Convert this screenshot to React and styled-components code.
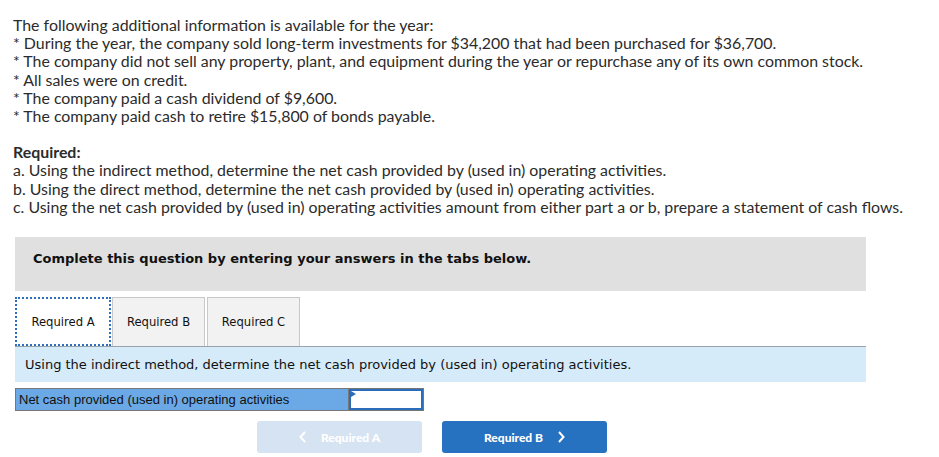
import React from "react";
import styled, { createGlobalStyle } from "styled-components";

const Global = createGlobalStyle`
  html, body { margin: 0; padding: 0; background: #fff; }
  body { font-family: Lato, "Noto Sans", sans-serif; color: #2b2b2b; }
  * { box-sizing: border-box; }
`;

const Page = styled.div`
  width: 939px;
  height: 457px;
  padding: 16px 0 0 15px;
  overflow: hidden;
`;

const Intro = styled.div`
  margin-left: -2px;
  font-size: 15.9px;
  line-height: 18.2px;
  color: #2b2b2b;
`;

const Line = styled.div`
  white-space: nowrap;
`;

const Heading = styled.div`
  font-weight: 700;
  margin-top: 18px;
`;

const Banner = styled.div`
  width: 851px;
  height: 54px;
  margin-top: 21px;
  background: #e0e0e0;
  padding: 14px 0 0 18px;
  font-family: "DejaVu Sans", Verdana, sans-serif;
  font-weight: 700;
  font-size: 13px;
  line-height: 16px;
  color: #111;
`;

const Tabs = styled.div`
  display: flex;
  margin-top: 6px;
  height: 49px;
`;

const Tab = styled.div`
  height: 49px;
  display: flex;
  align-items: center;
  justify-content: center;
  white-space: nowrap;
  font-family: "DejaVu Sans", Verdana, sans-serif;
  font-size: 11.6px;
  color: #111;
  width: ${(p) => p.$w}px;
  margin-right: ${(p) => (p.$active ? "1px" : "2px")};
  background: ${(p) => (p.$active ? "#fff" : "#f2f2f2")};
  border: ${(p) => (p.$active ? "2px dotted #2f6fbf" : "1px solid #c8c8c8")};
  border-bottom: ${(p) => (p.$active ? "2px dotted #2f6fbf" : "none")};
`;

const Prompt = styled.div`
  width: 851px;
  height: 36px;
  background: #d6ebf9;
  border-top: 1px solid #9aa3aa;
  display: flex;
  align-items: center;
  padding-left: 10px;
  font-family: "DejaVu Sans", Verdana, sans-serif;
  font-size: 13px;
  color: #111;
`;

const Row = styled.div`
  display: flex;
  margin-top: 6px;
  height: 23px;
  width: 409px;
  border: 1px solid #777;
`;

const Label = styled.div`
  width: 333px;
  background: #6aa9e6;
  border-right: 1px solid #777;
  display: flex;
  align-items: center;
  padding-left: 3px;
  font-family: "Liberation Sans", Arial, sans-serif;
  font-size: 13px;
  color: #111;
`;

const InputCell = styled.div`
  position: relative;
  flex: 1;
  background: #fff;
  border: 2px solid #2a6ebb;
`;

const Marker = styled.span`
  position: absolute;
  left: 0;
  top: 0;
  width: 0;
  height: 0;
  border-top: 3px solid transparent;
  border-bottom: 3px solid transparent;
  border-left: 5px solid #2a6ebb;
`;

const Nav = styled.div`
  display: flex;
  gap: 20px;
  margin-top: 10px;
  padding-left: 242px;
`;

const NavButton = styled.div`
  width: 165px;
  height: 32px;
  border-radius: 3px;
  background: ${(p) => (p.$disabled ? "#d6e3f2" : "#2671c0")};
  color: #fff;
  display: flex;
  align-items: center;
  justify-content: center;
  gap: 14px;
  font-family: Lato, "Noto Sans", sans-serif;
  font-weight: 900;
  font-size: 12px;
`;

const Chev = ({ dir }) => (
  <svg width="8" height="12" viewBox="0 0 8 12">
    <path
      d={dir === "left" ? "M6 1 L1.5 6 L6 11" : "M2 1 L6.5 6 L2 11"}
      fill="none"
      stroke="#fff"
      strokeWidth="2"
    />
  </svg>
);

export default function App() {
  return (
    <>
      <Global />
      <Page>
        <Intro>
          <Line>The following additional information is available for the year:</Line>
          <Line>* During the year, the company sold long-term investments for $34,200 that had been purchased for $36,700.</Line>
          <Line>* The company did not sell any property, plant, and equipment during the year or repurchase any of its own common stock.</Line>
          <Line>* All sales were on credit.</Line>
          <Line>* The company paid a cash dividend of $9,600.</Line>
          <Line>* The company paid cash to retire $15,800 of bonds payable.</Line>
          <Heading>Required:</Heading>
          <Line>a. Using the indirect method, determine the net cash provided by (used in) operating activities.</Line>
          <Line>b. Using the direct method, determine the net cash provided by (used in) operating activities.</Line>
          <Line>c. Using the net cash provided by (used in) operating activities amount from either part a or b, prepare a statement of cash flows.</Line>
        </Intro>
        <Banner>Complete this question by entering your answers in the tabs below.</Banner>
        <Tabs>
          <Tab $active $w={96}>Required A</Tab>
          <Tab $w={93}>Required B</Tab>
          <Tab $w={93}>Required C</Tab>
        </Tabs>
        <Prompt>Using the indirect method, determine the net cash provided by (used in) operating activities.</Prompt>
        <Row>
          <Label>Net cash provided (used in) operating activities</Label>
          <InputCell>
            <Marker />
          </InputCell>
        </Row>
        <Nav>
          <NavButton $disabled>
            <Chev dir="left" />
            <span>Required A</span>
          </NavButton>
          <NavButton>
            <span>Required B</span>
            <Chev dir="right" />
          </NavButton>
        </Nav>
      </Page>
    </>
  );
}
